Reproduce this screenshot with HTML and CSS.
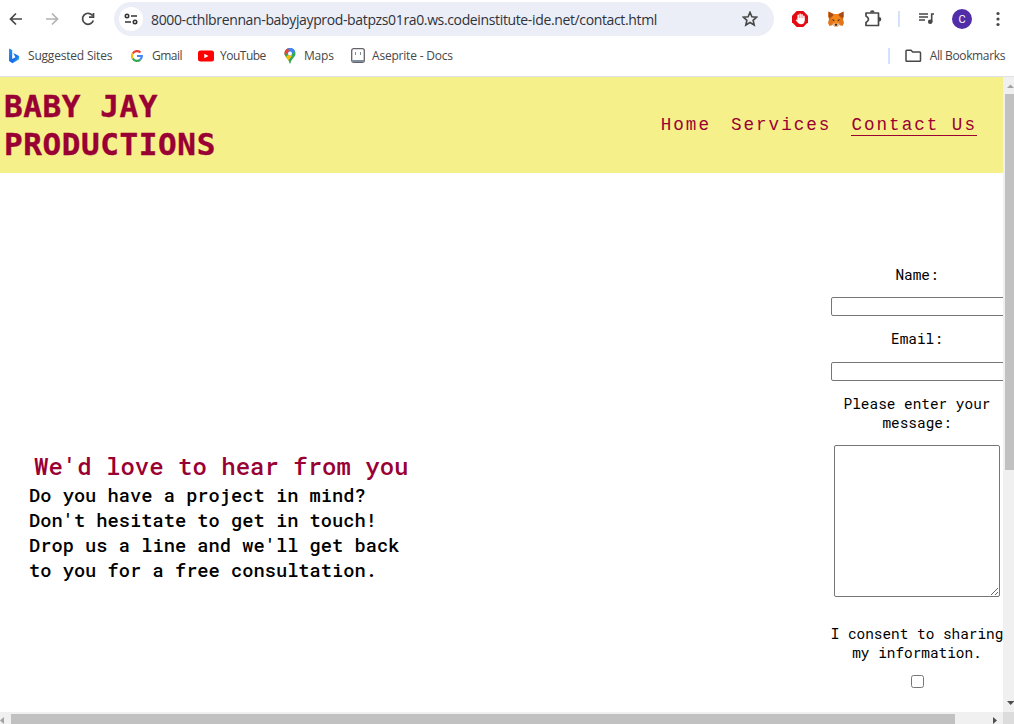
FILE: index.html
```html
<!DOCTYPE html>
<html lang="en">
<head>
<meta charset="utf-8">
<title>Baby Jay Productions - Contact</title>
<link rel="stylesheet" href="styles.css">
</head>
<body>
<div class="browser">
  <div class="toolbar">
    <svg class="nav-icons" width="114" height="38" fill="none" stroke="#474747" stroke-width="1.7">
      <path d="M22 19H11M16 13.5L10.500 19L16 24.500"/>
      <path stroke="#b2b2b2" d="M46 19H57M52 13.5L57.500 19L52 24.500"/>
      <path d="M92.500 15.500A5.500 5.500 0 1 0 93.300 20.500M93.500 13V17.200H89"/>
    </svg>
    <div class="address">
      <span class="site-info">
        <svg width="14" height="12" fill="none" stroke="#333" stroke-width="1.6"><circle cx="3" cy="3" r="1.700"/><path d="M7 3H13M1 9H7"/><circle cx="11" cy="9" r="1.700"/></svg>
      </span>
      <span class="url">8000-cthlbrennan-babyjayprod-batpzs01ra0.ws.codeinstitute-ide.net/contact.html</span>
      <svg class="star" width="16" height="16" fill="none" stroke="#474747" stroke-width="1.600"><path d="M8 1.300L9.900 5.700L14.700 6.100L11.100 9.300L12.200 14L8 11.500L3.800 14L4.900 9.300L1.300 6.100L6.100 5.700Z"/></svg>
    </div>
    <svg class="tools" width="240" height="38">
      <path fill="#e30b12" d="M22.700 11H29.300L34 15.700V22.300L29.300 27H22.700L18 22.300V15.700Z"/>
      <path fill="none" stroke="#fff" stroke-width="1.500" stroke-linecap="round" d="M24.200 19V15.300M26.100 19V14.300M28 19V14.800M29.900 20V16.300"/>
      <path fill="#fff" d="M23.500 18H30.600V21C30.400 23.300 29 24.300 27.200 24.300C25.200 24.300 23.500 22.500 21.700 20.200L22.200 19.500L23.500 20.200Z"/>
      <path fill="#e2761b" d="M54.500 11.500L60 14H64L69.500 11.500L70 16L69 19L70 23L68.500 26L65 25L63.500 26.500H60.500L59 25L55.500 26L54 23L55 19L54 16Z"/>
      <path fill="#a64b16" d="M54.500 11.500L60 15L55 18.500ZM69.500 11.500L64 15L69 18.500Z"/>
      <path fill="#f6851b" d="M60 14H64L66.500 19L64 24H60L57.500 19Z"/>
      <path fill="#3a312c" d="M57.500 19L60.500 20L60 21.500ZM66.500 19L63.500 20L64 21.500ZM60.500 24H63.500L63 25.500H61Z"/>
      <path fill="#d7c1b3" d="M58 24L60.500 23L61 26.500H60.500ZM66 24L63.500 23L63 26.500H63.500Z"/>
      <path fill="none" stroke="#474747" stroke-width="1.700" stroke-linejoin="round" d="M92 13H104.500V25.500H92V22.500Q97 19.300 92 16Z"/>
      <path fill="#474747" d="M96 12.500A2.300 2.300 0 0 1 100.600 12.500ZM105 17A2.300 2.300 0 0 1 105 21.600Z"/>
      <path fill="#d3e3fd" d="M124 11H126V27H124Z"/>
      <path fill="none" stroke="#474747" stroke-width="1.600" d="M145 14H154M145 17H154M145 20H151M157.700 22V14H160"/>
      <circle cx="156.200" cy="21.700" r="2.300" fill="#474747"/>
      <circle cx="188" cy="19" r="10" fill="#512da8"/>
      <text class="avatar" x="188" y="23" text-anchor="middle">C</text>
      <g fill="#474747"><circle cx="224" cy="13.500" r="1.600"/><circle cx="224" cy="19" r="1.600"/><circle cx="224" cy="24.500" r="1.600"/></g>
    </svg>
  </div>
  <div class="bookmarks">
    <span class="bm bing"><svg width="12" height="16"><defs><linearGradient id="bing" x2="1" y2="1"><stop stop-color="#239cf2"/><stop offset=".6" stop-color="#1769e5"/><stop offset="1" stop-color="#39d0ee"/></linearGradient></defs><path fill="url(#bing)" d="M1 .5L4.200 2V11L7.500 9.200L5.200 5L11 8Q11.500 10 10.800 11.500L4.500 15.300L1 13Z"/></svg><span>Suggested Sites</span></span>
    <span class="bm gmail"><svg width="12" height="12" viewBox="0 0 12 12" fill="none" stroke-width="2.200"><path stroke="#ea4335" d="M1.700 3.500A5 5 0 0 1 9.500 2.500"/><path stroke="#fbbc05" d="M1.700 3.500A5 5 0 0 0 1.700 8.500"/><path stroke="#34a853" d="M1.700 8.500A5 5 0 0 0 9.300 9.600"/><path stroke="#4285f4" d="M9.300 9.600Q10.800 8 10.800 6H6"/></svg><span class="tight">Gmail</span></span>
    <span class="bm youtube"><svg width="16" height="12"><rect width="16" height="11" y=".5" rx="2.500" fill="#f00"/><path d="M6.300 3.700L10.500 6L6.300 8.300Z" fill="#fff"/></svg><span class="tight">YouTube</span></span>
    <span class="bm maps"><svg width="12" height="16"><defs><clipPath id="pin"><path d="M6 0C9.500 0 11.500 2.500 11.500 5.500C11.500 9.500 7 10.500 6.500 15.500H5.500C5 10.500 .5 9.500 .5 5.500C.5 2.500 2.500 0 6 0Z"/></clipPath></defs><g clip-path="url(#pin)"><path fill="#34a853" d="M0 0H12V16H0Z"/><path fill="#fbbc04" d="M0 11L6 5L8 8L3 14Z"/><path fill="#4285f4" d="M4 -1H12V2L6 8L3 6Z"/><path fill="#ea4335" d="M0 0H4L5 3L1.500 7H0Z"/></g><circle cx="6" cy="5.500" r="2" fill="#fff"/></svg><span>Maps</span></span>
    <span class="bm aseprite"><svg width="14" height="15"><rect x=".7" y=".7" width="12.600" height="13.600" rx="2" fill="#fff" stroke="#65616b" stroke-width="1.300"/><path fill="#7f8d9c" d="M1 12H13V14H1Z"/><path stroke="#7f8d9c" d="M4.500 4V7M9.500 4V7"/></svg><span>Aseprite - Docs</span></span>
    <span class="all"><svg width="17" height="14" fill="none" stroke="#474747" stroke-width="1.500"><path d="M1 2Q1 1.200 1.800 1.200H6L7.700 3H14.700Q15.500 3 15.500 4V11.500Q15.500 12.300 14.700 12.300H1.800Q1 12.300 1 11.500Z"/></svg><span class="all-text">All Bookmarks</span></span>
  </div>
  <div class="viewport">
    <div class="page">
      <header class="header">
        <h1 class="logo">BABY JAY<br>PRODUCTIONS</h1>
        <nav class="menu"><a>Home</a><a>Services</a><a class="active">Contact Us</a></nav>
      </header>
      <main class="content">
        <section class="intro">
          <h2 class="intro-title">We'd love to hear from you</h2>
          <p class="intro-text">Do you have a project in mind?<br>Don't hesitate to get in touch!<br>Drop us a line and we'll get back<br>to you for a free consultation.</p>
        </section>
        <form class="form">
          <label class="label">Name:</label>
          <input class="field" type="text">
          <label class="label">Email:</label>
          <input class="field" type="text">
          <label class="label">Please enter your<br>message:</label>
          <textarea class="message"></textarea>
          <label class="label">I consent to sharing<br>my information.</label>
          <input class="consent" type="checkbox">
        </form>
      </main>
    </div>
    <div class="vbar"><svg width="11" height="17"><path fill="#a3a3a3" d="M4 11L7.500 7.500L11 11Z"/></svg><div class="vthumb"></div><svg class="down" width="11" height="16"><path fill="#505050" d="M4 5H11.500L7.700 9Z"/></svg></div>
    <div class="hbar"><svg width="11" height="12"><path fill="#a3a3a3" d="M4 5V12L0 8.500Z"/></svg><div class="hthumb"></div><svg class="right" width="14" height="12"><path fill="#505050" d="M4 5V12L8 8.500Z"/></svg></div>
    <div class="corner"></div>
  </div>
</div>
</body>
</html>
```
FILE: styles.css
```css
* { box-sizing: border-box; }
body { margin: 0; background: #fff; overflow: hidden; }
svg { display: block; flex: none; }
.browser { width: 1014px; height: 724px; display: flex; flex-direction: column; }

.toolbar { height: 38px; display: flex; align-items: center; }
.address { width: 660px; height: 34px; display: flex; align-items: center; padding: 0 16px 0 5px; border-radius: 17px; background: #ebeef7; }
.site-info { width: 24px; height: 24px; display: flex; align-items: center; justify-content: center; border-radius: 50%; background: #fff; }
.url { margin-left: 8px; font: 14px "Open Sans", sans-serif; letter-spacing: -0.36px; color: #30323a; white-space: nowrap; }
.star { margin-left: auto; }
.avatar { font: 11px Roboto, sans-serif; fill: #fff; }

.bookmarks { height: 39px; display: flex; align-items: center; padding: 0 9px 3px 8px; border-bottom: 1px solid #dfe1e5; font: 12px "Open Sans", sans-serif; letter-spacing: -0.2px; color: #474747; white-space: nowrap; }
.bm { display: flex; align-items: center; gap: 8px; }
.bing { width: 123px; }
.gmail { width: 67px; gap: 9px; }
.youtube { width: 86px; gap: 6px; }
.maps { width: 67px; }
.aseprite { gap: 7px; }
.tight { letter-spacing: -0.5px; }
.all { height: 16px; display: flex; align-items: center; gap: 8px; margin-left: auto; padding-left: 15px; border-left: 2px solid #d3e3fd; }
.all-text { letter-spacing: -0.36px; }

.viewport { flex: 1; min-height: 0; display: grid; grid-template-columns: 1003px 11px; grid-template-rows: 635px 12px; }
.page { overflow: hidden; font-family: "Roboto Mono", "Liberation Mono", monospace; }
.header { height: 96px; display: flex; justify-content: space-between; padding: 10px 26px 0 4px; background: #f6f08a; color: #990033; }
.logo { margin: 0; font: bold 31px/38px "DejaVu Sans Mono", monospace; letter-spacing: 0.6px; -webkit-text-stroke: 0.4px; }
.menu { display: flex; align-items: flex-start; gap: 20px; padding-top: 28px; font: 17.6px/20px "Liberation Mono", monospace; letter-spacing: 2px; }
.active { border-bottom: 1px solid #990033; }
.content { display: flex; justify-content: space-between; }
.intro { padding: 278px 0 0 29px; }
.intro-title { margin: 0 0 0 5px; font-size: 24px; font-weight: 500; line-height: 31px; color: #990033; }
.intro-text { margin: 0; font-size: 18.72px; font-weight: 500; line-height: 25px; }
.form { width: 172px; display: flex; flex-direction: column; align-items: center; padding-top: 92px; }
.label { font-size: 14.4px; line-height: 19px; text-align: center; white-space: nowrap; }
.field { align-self: flex-start; flex: none; width: 180px; height: 19px; margin: 13px 0; border: 1px solid #767676; border-radius: 2px; }
.field + .label + .field { margin: 14px 0 13px; }
.message { width: 166px; height: 152px; margin: 13px 0 27px; border: 1px solid #767676; border-radius: 2px; }
.consent { width: 13px; height: 13px; margin: 13px 0 0; }

.vbar { display: flex; flex-direction: column; background: #f0f0f0; }
.vthumb { height: 376px; margin-left: 2px; background: #c1c1c1; }
.down { margin-top: auto; }
.hbar { display: flex; background: #f0f0f0; }
.hthumb { width: 944px; margin-top: 2px; background: #c1c1c1; }
.right { margin-left: auto; }
.corner { background: #dcdcdc; }
```
